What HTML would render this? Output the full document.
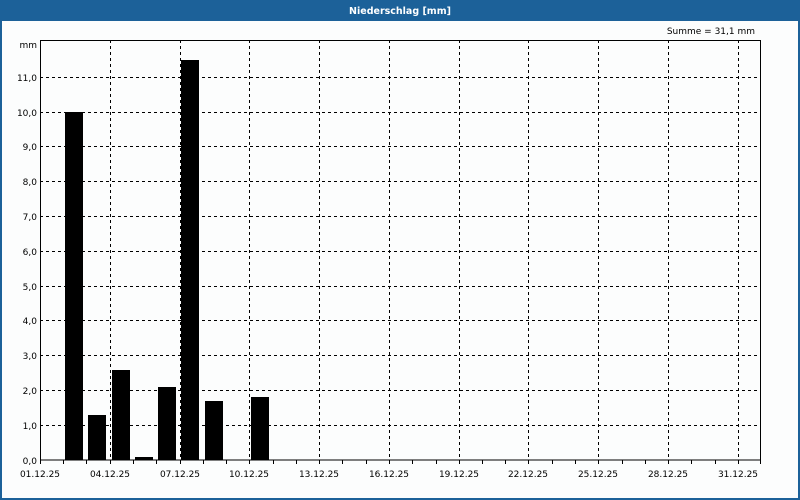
<!DOCTYPE html>
<html><head><meta charset="utf-8"><style>
html,body{margin:0;padding:0;width:800px;height:500px;overflow:hidden;background:#fff}
svg text{font-family:"DejaVu Sans","Liberation Sans",sans-serif;font-size:9px;fill:#000}
</style></head><body>
<svg width="800" height="500" xmlns="http://www.w3.org/2000/svg">
<rect x="0" y="0" width="800" height="500" fill="#1c6199"/>
<rect x="2" y="21" width="796" height="477" fill="#fcfdfd"/>
<text x="400" y="14" text-anchor="middle" style="fill:#fff;font-weight:bold;font-size:9.5px">Niederschlag [mm]</text>
<text x="755" y="34" text-anchor="end">Summe = 31,1 mm</text>
<g stroke="#000" stroke-width="1" stroke-dasharray="3,3" shape-rendering="crispEdges">
<line x1="40" x2="761" y1="425.5" y2="425.5"/><line x1="40" x2="761" y1="390.5" y2="390.5"/>
<line x1="40" x2="761" y1="355.5" y2="355.5"/><line x1="40" x2="761" y1="320.5" y2="320.5"/>
<line x1="40" x2="761" y1="286.5" y2="286.5"/><line x1="40" x2="761" y1="251.5" y2="251.5"/>
<line x1="40" x2="761" y1="216.5" y2="216.5"/><line x1="40" x2="761" y1="181.5" y2="181.5"/>
<line x1="40" x2="761" y1="146.5" y2="146.5"/><line x1="40" x2="761" y1="112.5" y2="112.5"/>
<line x1="40" x2="761" y1="77.5" y2="77.5"/>
<line y1="40" y2="460" x1="110.5" x2="110.5"/><line y1="40" y2="460" x1="180.5" x2="180.5"/>
<line y1="40" y2="460" x1="249.5" x2="249.5"/><line y1="40" y2="460" x1="319.5" x2="319.5"/>
<line y1="40" y2="460" x1="389.5" x2="389.5"/><line y1="40" y2="460" x1="459.5" x2="459.5"/>
<line y1="40" y2="460" x1="528.5" x2="528.5"/><line y1="40" y2="460" x1="598.5" x2="598.5"/>
<line y1="40" y2="460" x1="668.5" x2="668.5"/><line y1="40" y2="460" x1="738.5" x2="738.5"/>
</g>
<g fill="#000">
<rect x="65" y="112" width="18" height="348"/>
<rect x="88" y="415" width="18" height="45"/>
<rect x="112" y="370" width="18" height="90"/>
<rect x="135" y="457" width="18" height="3"/>
<rect x="158" y="387" width="18" height="73"/>
<rect x="181" y="60" width="18" height="400"/>
<rect x="205" y="401" width="18" height="59"/>
<rect x="251" y="397" width="18" height="63"/>
</g>
<rect x="40.5" y="40.5" width="720" height="419.5" fill="none" stroke="#000" stroke-width="1" shape-rendering="crispEdges"/>
<g stroke="#000" shape-rendering="crispEdges">
<path d="M40.5 460v4M63.5 460v4M86.5 460v4M110.5 460v4M133.5 460v4M156.5 460v4M180.5 460v4M203.5 460v4M226.5 460v4M249.5 460v4M273.5 460v4M296.5 460v4M319.5 460v4M342.5 460v4M366.5 460v4M389.5 460v4M412.5 460v4M436.5 460v4M459.5 460v4M482.5 460v4M505.5 460v4M528.5 460v4M552.5 460v4M575.5 460v4M598.5 460v4M622.5 460v4M645.5 460v4M668.5 460v4M691.5 460v4M715.5 460v4M738.5 460v4M760.5 460v4"/>
</g>
<g text-anchor="end">
<text x="37" y="48">mm</text>
<text x="37" y="81">11,0</text><text x="37" y="116">10,0</text>
<text x="37" y="150">9,0</text><text x="37" y="185">8,0</text><text x="37" y="220">7,0</text>
<text x="37" y="255">6,0</text><text x="37" y="290">5,0</text><text x="37" y="324">4,0</text>
<text x="37" y="359">3,0</text><text x="37" y="394">2,0</text><text x="37" y="429">1,0</text>
<text x="37" y="464">0,0</text>
</g>
<g text-anchor="middle">
<text x="40" y="477">01.12.25</text><text x="110" y="477">04.12.25</text>
<text x="180" y="477">07.12.25</text><text x="249" y="477">10.12.25</text>
<text x="319" y="477">13.12.25</text><text x="389" y="477">16.12.25</text>
<text x="459" y="477">19.12.25</text><text x="528" y="477">22.12.25</text>
<text x="598" y="477">25.12.25</text><text x="668" y="477">28.12.25</text>
<text x="738" y="477">31.12.25</text>
</g>
</svg>
</body></html>
